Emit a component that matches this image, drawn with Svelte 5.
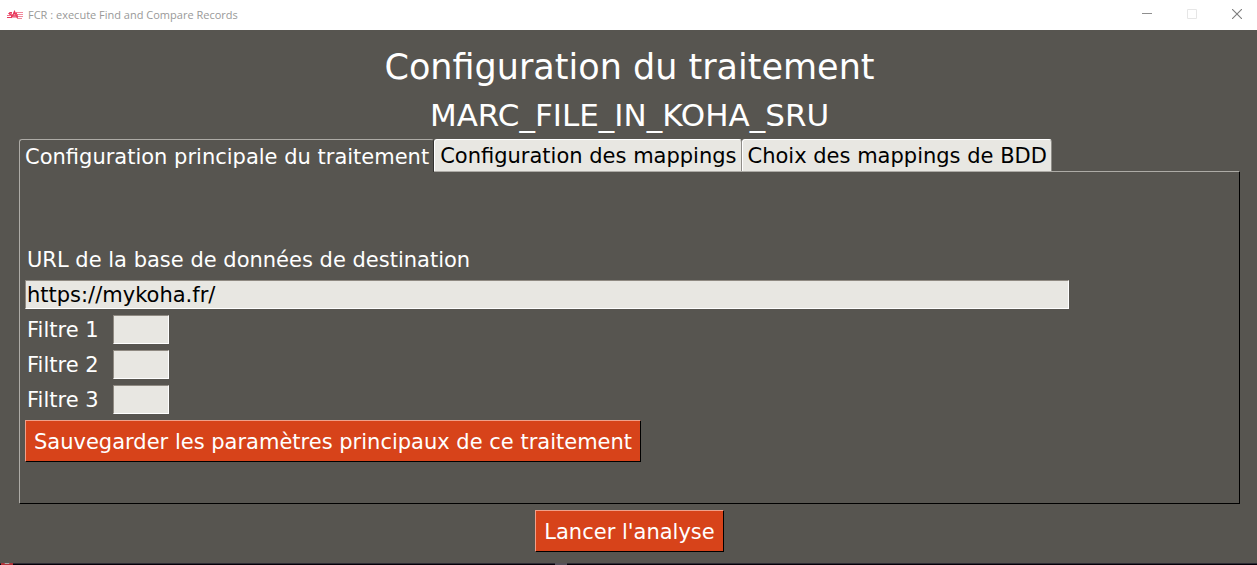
<script>
  const tabs = [
    'Configuration principale du traitement',
    'Configuration des mappings',
    'Choix des mappings de BDD'
  ];
  let active = $state(0);
  let url = $state('https://mykoha.fr/');
  let filters = $state(['', '', '']);
</script>

<div class="window">
  <header class="titlebar">
    <svg class="logo" width="16" height="10" viewBox="0 0 16 10" aria-hidden="true">
      <g fill="none" stroke="#e8385c" stroke-width="1">
        <path d="M9 2.5H16M10 4.5H16M10 6.5H16M10 8.5H15" opacity=".6" />
        <path d="M1 3.5H5M0 5.5H5M1 7.5H5" opacity=".7" />
        <path d="M5 2.5H2.5V4.5H4.5V7.500H0" />
        <path d="M4.500 8L7.500 1.500L10.500 8M5 6H11M6 3.500H10" stroke-width="1.300" />
        <path d="M5 4.500H11M6 7.500H10" opacity=".45" />
      </g>
    </svg>
    <span class="caption">FCR : execute Find and Compare Records</span>
    <div class="controls">
      <button type="button" aria-label="Réduire">
        <svg width="10" height="10" viewBox="0 0 10 10"><path d="M0 4.5H10" stroke="#8f8f8f" /></svg>
      </button>
      <button type="button" aria-label="Agrandir" disabled>
        <svg width="10" height="10" viewBox="0 0 10 10"><path d="M.5 .5H9.5V9.5H.5Z" fill="none" stroke="#e6e6e6" /></svg>
      </button>
      <button type="button" aria-label="Fermer">
        <svg width="10" height="10" viewBox="0 0 10 10"><path d="M0 0L10 10M10 0L0 10" stroke="#7d7d7d" stroke-width="1.1" /></svg>
      </button>
    </div>
  </header>

  <main>
    <h1>Configuration du traitement</h1>
    <h2>MARC_FILE_IN_KOHA_SRU</h2>

    <div class="tabs" role="tablist">
      {#each tabs as tab, i}
        <button
          type="button"
          role="tab"
          class="tab"
          class:active={active === i}
          aria-selected={active === i}
          onclick={() => (active = i)}>{tab}</button>
      {/each}
    </div>

    <section class="panel" role="tabpanel">
      {#if active === 0}
        <label class="url-label" for="url">URL de la base de données de destination</label>
        <input id="url" class="field url" type="text" bind:value={url} />
        {#each filters as _, i}
          <div class="filter">
            <label for="filtre-{i + 1}">Filtre {i + 1}</label>
            <input id="filtre-{i + 1}" class="field short" type="text" bind:value={filters[i]} />
          </div>
        {/each}
        <button type="button" class="action">Sauvegarder les paramètres principaux de ce traitement</button>
      {/if}
    </section>

    <button type="button" class="action run">Lancer l'analyse</button>
  </main>

  <div class="edge"></div>
</div>

<style>
  :global(body) {
    margin: 0;
    background: #575550;
  }

  .window {
    box-sizing: border-box;
    min-height: 100vh;
    display: flex;
    flex-direction: column;
    background: #575550;
    color: #fff;
    font: 21px/28px Verdana, "DejaVu Sans", sans-serif;
  }

  .titlebar {
    display: flex;
    align-items: center;
    height: 30px;
    padding-left: 7px;
    background: #fff;
    color: #999;
    font: 11px/16px "Segoe UI", "Open Sans", sans-serif;
  }

  .logo {
    margin-right: 5px;
  }

  .caption {
    flex: 1;
    white-space: nowrap;
  }

  .controls {
    display: flex;
    align-self: stretch;
    margin-right: -2px;
    padding-bottom: 2px;
  }

  .controls button {
    display: flex;
    align-items: center;
    justify-content: center;
    width: 45px;
    padding: 0;
    border: 0;
    background: none;
  }

  main {
    flex: 1;
    display: flex;
    flex-direction: column;
    padding: 12px 17px 11px 19px;
  }

  h1,
  h2 {
    margin: 0;
    font-weight: 400;
    text-align: center;
  }

  h1 {
    font-size: 35px;
    line-height: 50px;
  }

  h2 {
    font-size: 31px;
    line-height: 47px;
  }

  .tabs {
    display: flex;
  }

  .tab {
    height: 33px;
    margin-bottom: -1px;
    padding: 1px 4px 0 5px;
    border: 1px solid;
    border-color: #fff #8f8d88 #adaba6 #fff;
    border-radius: 3px 3px 0 0;
    background: #e8e7e2;
    color: #000;
    font: inherit;
    white-space: nowrap;
  }

  .tab.active {
    position: relative;
    border-color: #adaba6 #33322f transparent #adaba6;
    border-bottom: 0;
    background: #575550;
    color: #fff;
  }

  .panel {
    flex: 1;
    display: flex;
    flex-direction: column;
    align-items: flex-start;
    justify-content: center;
    gap: 6px;
    padding: 38px 5px 5px;
    border: 1px solid;
    border-color: #adaba6 #000 #000 #adaba6;
  }

  .url-label {
    padding-left: 2px;
  }

  .field {
    box-sizing: border-box;
    height: 29px;
    padding: 1px 1px 0;
    border: 1px solid;
    border-color: #8f8a82 #fff #fff #8f8a82;
    border-radius: 0;
    outline: 0;
    background: #e8e7e2;
    color: #000;
    font: inherit;
  }

  .url {
    width: 1044px;
    max-width: 100%;
  }

  .short {
    width: 56px;
  }

  .filter {
    display: flex;
    align-items: center;
    gap: 14px;
    padding-left: 2px;
  }

  .filter label {
    line-height: 30px;
    margin-bottom: -1px;
  }

  .action {
    height: 42px;
    padding: 1px 8px 0;
    border: 1px solid;
    border-color: #f0a08a #000 #000 #f0a08a;
    border-radius: 0;
    background: #d7431a;
    color: #fff;
    font: inherit;
    white-space: nowrap;
  }

  .run {
    align-self: center;
    margin-top: 6px;
  }

  .edge {
    height: 2px;
    background:
      radial-gradient(ellipse 4px 2px at 7px 0, #aaa 60%, transparent 70%),
      linear-gradient(#b03238, #b03238) 1px 0 / 12px 2px no-repeat,
      linear-gradient(#55515a, #55515a) 555px 0 / 12px 2px no-repeat,
      linear-gradient(#2e2c36 50%, #050008 50%);
  }
</style>
